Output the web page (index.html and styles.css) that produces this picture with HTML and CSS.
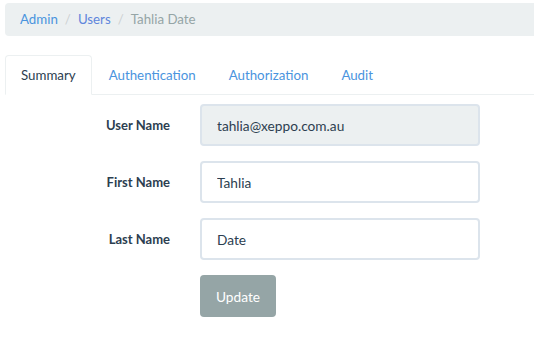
FILE: index.html
```html
<!doctype html>
<html lang="en">
<head>
  <meta charset="utf-8">
  <title>Tahlia Date - Users</title>
  <link rel="stylesheet" href="styles.css">
</head>
<body>
  <div class="page">
    <ol class="breadcrumb">
      <li><a href="#">Admin</a></li>
      <li><a href="#" class="visited">Users</a></li>
      <li class="active">Tahlia Date</li>
    </ol>

    <ul class="tabs">
      <li class="active"><a href="#">Summary</a></li>
      <li><a href="#">Authentication</a></li>
      <li><a href="#">Authorization</a></li>
      <li><a href="#">Audit</a></li>
    </ul>

    <form class="user-form">
      <div class="form-row">
        <label for="userName">User Name</label>
        <input id="userName" class="form-control" type="text" value="tahlia@xeppo.com.au" readonly>
      </div>
      <div class="form-row">
        <label for="firstName">First Name</label>
        <input id="firstName" class="form-control" type="text" value="Tahlia">
      </div>
      <div class="form-row">
        <label for="lastName">Last Name</label>
        <input id="lastName" class="form-control" type="text" value="Date">
      </div>
      <div class="form-row">
        <span></span>
        <button type="button" class="btn">Update</button>
      </div>
    </form>
  </div>
</body>
</html>
```

FILE: styles.css
```css
html, body {
  margin: 0;
  overflow: hidden;
}

body {
  font-family: 'Lato', 'Helvetica Neue', Arial, sans-serif;
  font-size: 13.3px;
  color: #2c3e50;
  background: #fff;
}

a {
  color: #4a94de;
  text-decoration: none;
}

a.visited {
  color: #5f86dc;
}

.page {
  width: 545px;
  padding: 3px 0 0 5px;
}

.breadcrumb {
  display: flex;
  margin: 0;
  padding: 6px 15px;
  line-height: 21px;
  list-style: none;
  background: #ecf0f1;
  border-radius: 4px;
}

.breadcrumb li + li::before {
  content: "/";
  padding: 0 7px;
  color: #ccd1d1;
}

.breadcrumb .active {
  color: #95a5a6;
}

.tabs {
  display: flex;
  margin: 19px 0 0;
  padding: 0;
  list-style: none;
  border-bottom: 1px solid #ecf0f1;
}

.tabs li {
  margin-bottom: -1px;
  margin-right: 1px;
}

.tabs a {
  display: block;
  padding: 9px 15px;
  line-height: 20px;
  border: 1px solid transparent;
  border-radius: 4px 4px 0 0;
}

.tabs .active a {
  color: #2c3e50;
  background: #fff;
  border-color: #ecf0f1 #ecf0f1 transparent;
}

.user-form {
  display: grid;
  row-gap: 15px;
  padding-top: 9px;
}

.form-row {
  display: grid;
  grid-template-columns: 165px 280px;
  column-gap: 30px;
  align-items: center;
}

.form-row label {
  font-weight: bold;
  font-size: 13px;
  text-align: right;
}

.form-control {
  box-sizing: border-box;
  height: 42px;
  padding: 0 15px;
  font-family: inherit;
  font-size: 13.7px;
  color: #2c3e50;
  background: #fff;
  border: 2px solid #dce4ec;
  border-radius: 4px;
  outline: none;
}

.form-control[readonly] {
  background: #ecf0f1;
}

.btn {
  justify-self: start;
  height: 42px;
  padding: 0 16px;
  font-family: inherit;
  font-size: 13.7px;
  color: #fff;
  background: #95a5a6;
  border: 0;
  border-radius: 4px;
}
```
